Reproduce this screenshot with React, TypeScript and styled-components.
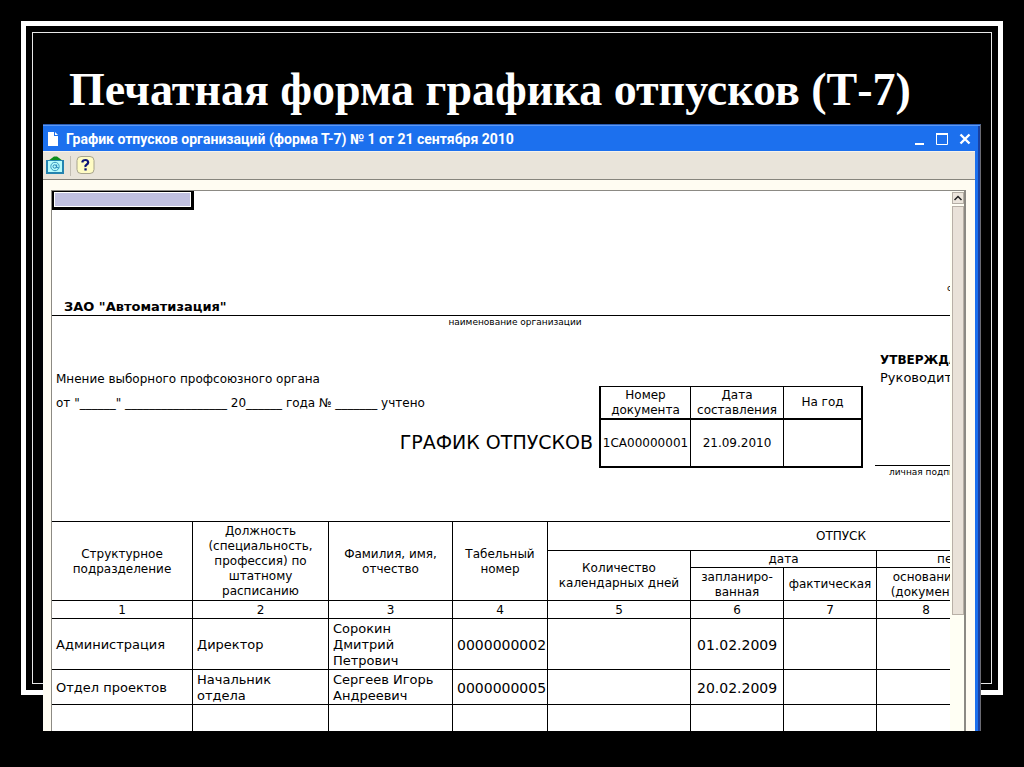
import React from 'react';
import styled, { createGlobalStyle } from 'styled-components';

const GlobalStyle = createGlobalStyle`
  *, *::before, *::after { box-sizing: border-box; }
  body {
    margin: 0;
    background: #000;
    color: #000;
    font-family: "DejaVu Sans", Verdana, sans-serif;
  }
`;

const Slide = styled.main`
  display: grid;
  min-height: 100vh;
  background: #000;
`;

const SlideFrame = styled.div`
  grid-area: 1 / 1;
  margin: 21px 21px 72px;
  border: 5px solid #fff;
  outline: 1px solid #e8e8e8;
  outline-offset: -12px;
`;

const SlideContent = styled.div`
  grid-area: 1 / 1;
  min-width: 0;
  padding: 64px 43px 36px;
  z-index: 1;
`;

const SlideTitle = styled.h1`
  margin: 0 0 8px 26px;
  color: #fff;
  font: bold 46px/52px "Liberation Serif", "Times New Roman", serif;
`;

const Window = styled.section`
  border-top: 1px solid #2a5cb4;
  border-right: 1px solid #6a6a72;
  background: #1c70ee;
  box-shadow: inset -2px 0 0 #1840a0;
`;

const TitleBar = styled.header`
  display: flex;
  align-items: center;
  height: 26px;
  padding: 0 8px 0 4px;
  border-top: 1px solid #5c98f4;
  color: #fff;
`;

const WindowTitle = styled.h2`
  flex: 1;
  margin: 0 0 0 7px;
  font: bold 14px/18px Roboto, Arial, sans-serif;
  white-space: nowrap;
`;

const IconButton = styled.button`
  display: flex;
  align-items: center;
  justify-content: center;
  padding: 0;
  border: 0;
  background: transparent;
  color: inherit;
`;

const WindowButtons = styled.div`
  display: flex;
  gap: 9px;
`;

const WindowBody = styled.div`
  margin-right: 5px;
  background: #fffcf2;
`;

const Toolbar = styled.div`
  display: flex;
  align-items: center;
  gap: 5px;
  height: 29px;
  padding-left: 3px;
  border-top: 1px solid #f6f2ea;
  border-bottom: 1px solid #86847c;
  background: #e9e4da;
`;

const ToolbarDivider = styled.span`
  width: 1px;
  height: 20px;
  background: #c2bdb2;
`;

const Workspace = styled.div`
  padding: 10px 9px 0 8px;
`;

const Viewport = styled.div`
  display: flex;
  border: solid #8c8a84;
  border-width: 1px 2px 0 1px;
  background: #fff;
`;

const Pane = styled.div`
  flex: 1;
  min-width: 0;
  overflow: hidden;
`;

const ScrollBar = styled.div`
  display: flex;
  flex-direction: column;
  gap: 2px;
  width: 14px;
  padding: 1px 0 0 2px;
  background: #fffff4;
`;

const ScrollUp = styled(IconButton)`
  height: 12px;
  border: 1px solid #b4aea4;
  background: #ece6dc;
`;

const ScrollThumb = styled.div`
  height: 409px;
  border: 1px solid #b8b0a6;
  background: #e9e2d8;
`;

const Sheet = styled.article`
  width: 1083px;
  font-size: 12px;
  line-height: 16px;
`;

const SelectedCell = styled.div`
  width: 142px;
  height: 19px;
  border: solid #000;
  border-width: 1px 3px 3px 2px;
  background: #c0c0e0;
  box-shadow: inset 0 0 0 1px #fff;
`;

const FormNote = styled.p`
  margin: 72px 0 5px;
  padding-left: 895px;
  font-size: 9px;
  line-height: 12px;
`;

const Organization = styled.p`
  margin: 0;
  padding-left: 12px;
  border-bottom: 1px solid #000;
  font-size: 13px;
  font-weight: bold;
`;

const Caption = styled.p`
  margin: 0;
  font-size: 9px;
  line-height: 12px;
`;

const OrganizationCaption = styled(Caption)`
  width: 926px;
  text-align: center;
`;

const FormHead = styled.div`
  display: grid;
  grid-template-columns: 547px 264px 1fr;
  align-items: start;
  margin: 23px 0 43px;
`;

const Opinion = styled.div`
  display: flex;
  flex-direction: column;
  gap: 8px;
  padding: 20px 6px 0 4px;
`;

const Line = styled.p`
  margin: 0;
  white-space: nowrap;
`;

const FormTitle = styled.h3`
  margin: 11px 0 0;
  font-size: 19px;
  font-weight: normal;
  line-height: 24px;
  text-align: right;
`;

const Approval = styled.div`
  margin-left: 12px;
  font-size: 13px;
  line-height: 18px;
`;

const ApprovalLine = styled.p`
  margin: 0;
  padding-left: 5px;
`;

const ApprovalTitle = styled(ApprovalLine)`
  font-size: 12px;
  font-weight: bold;
`;

const Signature = styled(Caption)`
  margin-top: 78px;
  padding-left: 14px;
  border-top: 1px solid #000;
`;

const Grid = styled.table`
  width: 100%;
  table-layout: fixed;
  border-spacing: 0;
  border-top: 1px solid #000;
`;

const HeadCell = styled.th`
  padding: 1px 0 0;
  border: solid #000;
  border-width: 0 1px 1px 0;
  font-size: 12px;
  font-weight: normal;
  line-height: 15px;
  text-align: center;
`;

const DataCell = styled.td<{ $numeric?: boolean }>`
  padding: 1px ${(p) => (p.$numeric ? 0 : 12)}px 0 4px;
  border: solid #000;
  border-width: 0 1px 1px 0;
  font-size: ${(p) => (p.$numeric ? '14px' : '13px')};
  line-height: 16px;
`;

const DateCell = styled(DataCell)`
  padding-left: 6px;
`;

const ContinuedCell = styled(DataCell)`
  border-bottom-width: 0;
`;

const Row = styled.tr<{ $height: number }>`
  height: ${(p) => p.$height}px;
`;

const Col = styled.col<{ $width: number }>`
  width: ${(p) => p.$width}px;
`;

const DocumentGrid = styled(Grid)`
  margin-top: 35px;
  border-left: 2px solid #000;

  th { border-bottom-width: 2px; padding: 0; }
  td {
    padding: 0;
    border-bottom-width: 2px;
    font-size: 12px;
    text-align: center;
  }
  tr > :last-child { border-right-width: 2px; }
`;

const FileIcon = () => (
  <svg width="12" height="16" viewBox="0 0 12 16" aria-hidden="true">
    <path d="M1 1h6v4h4v10H1z" fill="#fff" />
    <path d="M8 1l3 3H8z" fill="#fff" />
  </svg>
);

const MailIcon = () => (
  <svg width="19" height="19" viewBox="0 0 19 19" aria-hidden="true">
    <path d="M2 5L8 0.500h3L17 5z" fill="#0c8c1c" />
    <rect x="0" y="4" width="18" height="14" fill="#2484b0" />
    <rect x="2" y="5" width="14" height="11" fill="#b8fcfc" />
    <circle cx="9" cy="10.500" r="4.200" fill="none" stroke="#3898c0" />
    <circle cx="8.700" cy="10.500" r="1.700" fill="none" stroke="#2484b8" />
    <path d="M10.700 8.500v3.200h2" fill="none" stroke="#2484b8" />
  </svg>
);

const HelpIcon = () => (
  <svg width="19" height="19" viewBox="0 0 19 19" aria-hidden="true">
    <rect x="1" y="0.500" width="17" height="17" rx="4" fill="#fffcc4" stroke="#a8a48c" />
    <path d="M6.500 6.500V5.300Q7 4 9.500 4T12.200 6.500Q12 7.900 10.500 8.700T9.500 11" fill="none" stroke="#0c1478" strokeWidth="2.200" />
    <rect x="8.400" y="12.300" width="2.300" height="2.200" fill="#0c1478" />
  </svg>
);

const MinimizeIcon = () => (
  <svg width="14" height="14" viewBox="0 0 14 14" aria-hidden="true">
    <path d="M3 12h9" stroke="#fff" strokeWidth="2" />
  </svg>
);

const MaximizeIcon = () => (
  <svg width="14" height="14" viewBox="0 0 14 14" aria-hidden="true">
    <path d="M1.500 1.500h11v11h-11z" fill="none" stroke="#fff" />
    <path d="M1 2h12" stroke="#fff" strokeWidth="2" />
  </svg>
);

const CloseIcon = () => (
  <svg width="14" height="14" viewBox="0 0 14 14" aria-hidden="true">
    <path d="M2.500 2.500l9 9M11.500 2.500l-9 9" stroke="#fff" strokeWidth="2.400" />
  </svg>
);

const UpIcon = () => (
  <svg width="10" height="8" viewBox="0 0 10 8" aria-hidden="true">
    <path d="M1.500 6L5 2.500 8.500 6" fill="none" stroke="#222" strokeWidth="1.500" />
  </svg>
);

const columnWidths = [141, 136, 124, 95, 143, 93, 93, 99, 159];

const employees = [
  { unit: 'Администрация', post: 'Директор', name: 'Сорокин Дмитрий Петрович', id: '0000000002', date: '01.02.2009', height: 51 },
  { unit: 'Отдел проектов', post: 'Начальник отдела', name: 'Сергеев Игорь Андреевич', id: '0000000005', date: '20.02.2009', height: 35 },
];

const VacationTable = () => (
  <Grid>
    <colgroup>
      {columnWidths.map((w, i) => <Col key={i} $width={w} />)}
    </colgroup>
    <thead>
      <Row $height={29}>
        <HeadCell rowSpan={3}>Структурное подразделение</HeadCell>
        <HeadCell rowSpan={3}>Должность (специальность, профессия) по штатному расписанию</HeadCell>
        <HeadCell rowSpan={3}>Фамилия, имя, отчество</HeadCell>
        <HeadCell rowSpan={3}>Табельный номер</HeadCell>
        <HeadCell colSpan={5}>ОТПУСК</HeadCell>
      </Row>
      <Row $height={17}>
        <HeadCell rowSpan={2}>Количество календарных дней</HeadCell>
        <HeadCell colSpan={2}>дата</HeadCell>
        <HeadCell colSpan={2}>перенесение отпуска</HeadCell>
      </Row>
      <Row $height={33}>
        <HeadCell>запланиро-<br />ванная</HeadCell>
        <HeadCell>фактическая</HeadCell>
        <HeadCell>основание (документ)</HeadCell>
        <HeadCell />
      </Row>
      <Row $height={18}>
        {columnWidths.map((_, i) => <HeadCell key={i}>{i + 1}</HeadCell>)}
      </Row>
    </thead>
    <tbody>
      {employees.map((e) => (
        <Row key={e.id} $height={e.height}>
          <DataCell>{e.unit}</DataCell>
          <DataCell>{e.post}</DataCell>
          <DataCell>{e.name}</DataCell>
          <DataCell $numeric>{e.id}</DataCell>
          <DataCell />
          <DateCell $numeric>{e.date}</DateCell>
          <DataCell />
          <DataCell />
          <DataCell />
        </Row>
      ))}
      <Row $height={26}>
        {columnWidths.map((_, i) => <ContinuedCell key={i} />)}
      </Row>
    </tbody>
  </Grid>
);

export default function App() {
  return (
    <Slide>
      <GlobalStyle />
      <SlideFrame />
      <SlideContent>
        <SlideTitle>Печатная форма графика отпусков (Т-7)</SlideTitle>
        <Window>
          <TitleBar>
            <FileIcon />
            <WindowTitle>График отпусков организаций (форма Т-7) № 1 от 21 сентября 2010</WindowTitle>
            <WindowButtons>
              <IconButton aria-label="Свернуть"><MinimizeIcon /></IconButton>
              <IconButton aria-label="Развернуть"><MaximizeIcon /></IconButton>
              <IconButton aria-label="Закрыть"><CloseIcon /></IconButton>
            </WindowButtons>
          </TitleBar>
          <WindowBody>
            <Toolbar>
              <IconButton aria-label="Отправить"><MailIcon /></IconButton>
              <ToolbarDivider />
              <IconButton aria-label="Справка"><HelpIcon /></IconButton>
            </Toolbar>
            <Workspace>
              <Viewport>
                <Pane>
                  <Sheet>
                    <SelectedCell />
                    <FormNote>с</FormNote>
                    <Organization>ЗАО "Автоматизация"</Organization>
                    <OrganizationCaption>наименование организации</OrganizationCaption>
                    <FormHead>
                      <Opinion>
                        <Line>Мнение выборного профсоюзного органа</Line>
                        <Line>от "______" _________________ 20______ года № _______ учтено</Line>
                        <FormTitle>ГРАФИК ОТПУСКОВ</FormTitle>
                      </Opinion>
                      <DocumentGrid>
                        <colgroup>
                          <Col $width={90} />
                          <Col $width={93} />
                          <Col $width={79} />
                        </colgroup>
                        <thead>
                          <Row $height={33}>
                            <HeadCell>Номер документа</HeadCell>
                            <HeadCell>Дата составления</HeadCell>
                            <HeadCell>На год</HeadCell>
                          </Row>
                        </thead>
                        <tbody>
                          <Row $height={48}>
                            <DataCell>1СА00000001</DataCell>
                            <DataCell>21.09.2010</DataCell>
                            <DataCell />
                          </Row>
                        </tbody>
                      </DocumentGrid>
                      <Approval>
                        <ApprovalTitle>УТВЕРЖДАЮ</ApprovalTitle>
                        <ApprovalLine>Руководитель</ApprovalLine>
                        <Signature>личная подпись</Signature>
                      </Approval>
                    </FormHead>
                    <VacationTable />
                  </Sheet>
                </Pane>
                <ScrollBar>
                  <ScrollUp aria-label="Прокрутить вверх"><UpIcon /></ScrollUp>
                  <ScrollThumb />
                </ScrollBar>
              </Viewport>
            </Workspace>
          </WindowBody>
        </Window>
      </SlideContent>
    </Slide>
  );
}
